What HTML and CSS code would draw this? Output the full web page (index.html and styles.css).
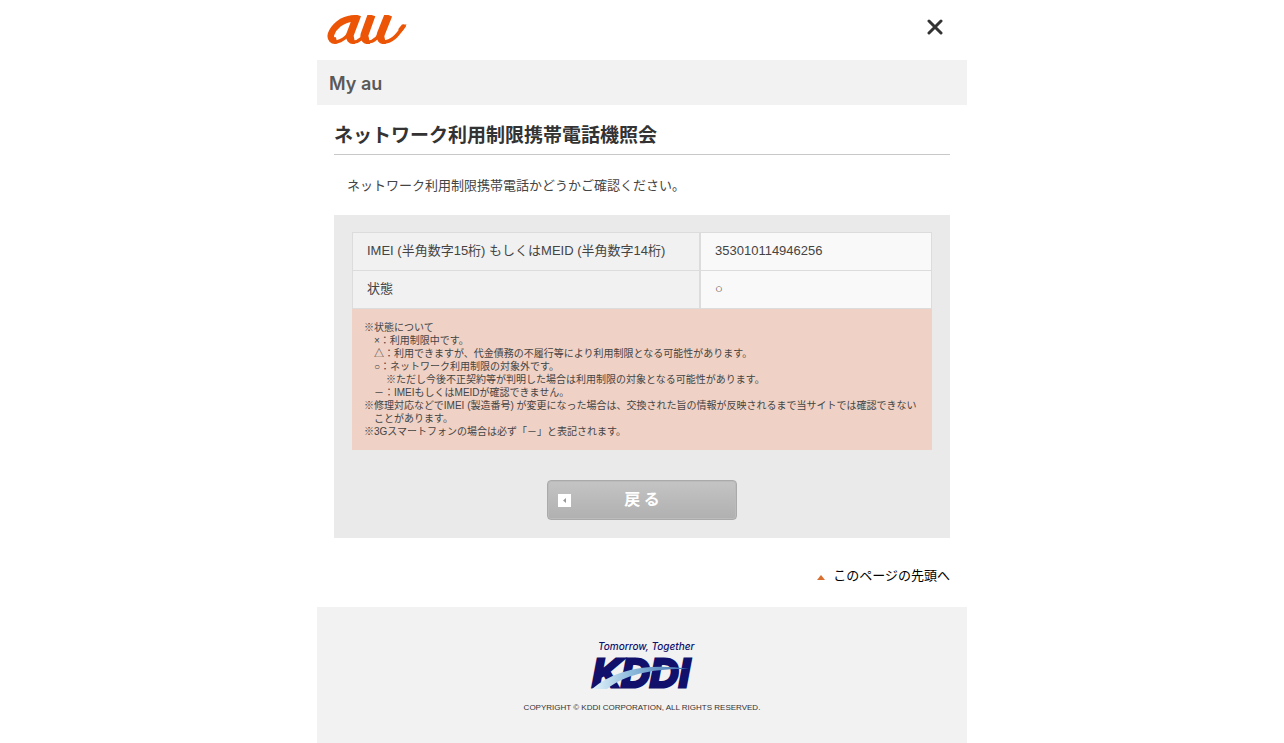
FILE: index.html
```html
<!DOCTYPE html>
<html lang="ja">
<head>
<meta charset="utf-8">
<meta name="viewport" content="width=device-width, initial-scale=1">
<title>ネットワーク利用制限携帯電話機照会</title>
<link rel="stylesheet" href="styles.css">
</head>
<body>
<div class="page" id="top">
  <header class="header">
    <svg class="au-logo" viewBox="0 0 240 88" role="img" aria-label="au">
      <g fill="none" stroke="#eb5505">
        <path stroke-width="20" d="M78 11C42 12 18 38 11 58C7 72 16 80 28 77"/>
        <path stroke-width="11" d="M70 7L92 6"/>
        <path stroke-width="10" d="M22 82C48 80 68 58 78 36"/>
        <path stroke-width="23" d="M91 0L69 58C65 72 72 78 82 76"/>
        <path stroke-width="10" d="M74 82C96 84 112 66 122 44"/>
        <path stroke-width="24" d="M134 0L113 58C109 72 117 78 127 76"/>
        <path stroke-width="10" d="M118 82C142 84 158 64 168 38"/>
        <path stroke-width="24" d="M185 0L162 58C158 72 166 78 175 76"/>
        <path stroke-width="11" d="M166 82C198 84 214 58 234 31"/>
      </g>
      <path fill="#eb5505" d="M214 44L226 29H240L228 48Z"/>
    </svg>
    <button class="close" type="button" aria-label="閉じる">
      <svg class="close-icon" viewBox="0 0 16 16"><path d="M2 2L14 14M14 2L2 14"/></svg>
    </button>
  </header>
  <div class="service">My au</div>
  <main class="main">
    <h1 class="title">ネットワーク利用制限携帯電話機照会</h1>
    <p class="lead">ネットワーク利用制限携帯電話かどうかご確認ください。</p>
    <section class="panel">
      <table class="result">
        <tr><th scope="row">IMEI (半角数字15桁) もしくはMEID (半角数字14桁)</th><td>353010114946256</td></tr>
        <tr><th scope="row">状態</th><td>○</td></tr>
      </table>
      <div class="notes">
        <p class="note">※状態について</p>
        <p class="state">×：利用制限中です。</p>
        <p class="state">△：利用できますが、代金債務の不履行等により利用制限となる可能性があります。</p>
        <p class="state">○：ネットワーク利用制限の対象外です。</p>
        <p class="substate">※ただし今後不正契約等が判明した場合は利用制限の対象となる可能性があります。</p>
        <p class="state">－：IMEIもしくはMEIDが確認できません。</p>
        <p class="note">※修理対応などでIMEI (製造番号) が変更になった場合は、交換された旨の情報が反映されるまで当サイトでは確認できないことがあります。</p>
        <p class="note">※3Gスマートフォンの場合は必ず「－」と表記されます。</p>
      </div>
      <button class="back" type="button">
        <svg class="back-icon" viewBox="0 0 13 13"><path fill="#fff" d="M0 0H13V13H0Z"/><path fill="#999" d="M8 4V9L5 6.500Z"/></svg>
        <span class="back-label">戻 る</span>
      </button>
    </section>
    <p class="to-top"><a href="#top"><svg class="up-icon" viewBox="0 0 8 5"><path fill="#d9702f" d="M4 0L8 5H0Z"/></svg>このページの先頭へ</a></p>
  </main>
  <footer class="footer">
    <svg class="kddi-logo" viewBox="0 0 102 48" role="img" aria-label="Tomorrow, Together KDDI">
      <defs>
        <linearGradient id="arc" x1="0" x2="1"><stop offset="0" stop-color="#e4f3fa"/><stop offset=".4" stop-color="#8dbbdc"/><stop offset="1" stop-color="#3c6dac"/></linearGradient>
      </defs>
      <text class="slogan" x="7" y="9">Tomorrow, Together</text>
      <text class="wordmark" x="1" y="46">KDDI</text>
      <path fill="url(#arc)" d="M1 48C24 28 58 22 98 28C64 27 34 33 16 48Z"/>
    </svg>
    <p class="copyright">COPYRIGHT © KDDI CORPORATION, ALL RIGHTS RESERVED.</p>
  </footer>
</div>
</body>
</html>
```
FILE: styles.css
```css
* { box-sizing: border-box; }
body {
  margin: 0;
  background: #fff;
  color: #444;
  font: 13px/20px "Liberation Sans", "Noto Sans CJK JP", sans-serif;
}
p, h1 { margin: 0; }
button { font-family: inherit; cursor: pointer; }
.page { max-width: 650px; margin: 0 auto; }
.header {
  display: flex;
  justify-content: space-between;
  align-items: flex-start;
  height: 60px;
  padding: 15px 20px 0 10px;
}
.au-logo { width: 80px; height: 29px; }
.close { padding: 4px; border: 0; background: none; line-height: 0; }
.close-icon { width: 16px; height: 16px; fill: none; stroke: #333; stroke-width: 3; stroke-linecap: round; }
.service {
  padding: 13px 12px 11px;
  background: #f2f2f2;
  color: #595959;
  font: 600 18px/21px Inter, sans-serif;
}
.main { padding: 16px 17px 21px; }
.title {
  padding-bottom: 4px;
  border-bottom: 1px solid #c8c8c8;
  color: #333;
  font-size: 19px;
  line-height: 29px;
}
.lead { padding: 21px 13px 19px; }
.panel { padding: 17px 18px 18px; background: #eaeaea; }
.result { width: 100%; border-collapse: separate; border-spacing: 0; table-layout: fixed; }
.result th, .result td {
  padding: 8px 14px 9px;
  border: 1px solid #dcdcdc;
  font-weight: normal;
  text-align: left;
}
.result th { width: 60%; background: #f1f1f1; }
.result td { background: #f9f9f9; }
.result tr + tr > * { border-top: 0; }
.notes {
  padding: 12px;
  background: #efd1c5;
  font-size: 10px;
  line-height: 13px;
}
.note { padding-left: 10px; text-indent: -10px; }
.state { padding-left: 10px; }
.substate { padding-left: 22px; }
.back {
  display: grid;
  grid-template-columns: 13px 1fr 13px;
  align-items: center;
  width: 190px;
  height: 40px;
  margin: 30px auto 0;
  padding: 0 10px;
  border: 1px solid #aaa;
  border-radius: 4px;
  background: linear-gradient(#c4c4c4, #b0b0b0);
  box-shadow: inset 0 0 0 1px #bbb;
  color: #fff;
}
.back-icon { width: 13px; height: 13px; }
.back-label { padding-bottom: 4px; font: bold 16px/20px "Noto Sans CJK JP", sans-serif; }
.to-top { padding-top: 28px; text-align: right; }
.to-top a { color: #000; text-decoration: none; }
.up-icon { width: 8px; height: 5px; margin-right: 8px; }
.footer {
  padding: 34px 0 30px;
  background: #f2f2f2;
  color: #333;
  text-align: center;
}
.kddi-logo { display: block; width: 102px; height: 48px; margin: 0 auto 12px; overflow: visible; }
.slogan { fill: #11116b; font: italic 500 10px Inter, sans-serif; }
.wordmark { fill: #11116b; stroke: #11116b; stroke-width: 3; font: italic bold 40px "Liberation Sans", sans-serif; }
.copyright { font-size: 8px; line-height: 14px; margin-bottom: -2px; }
```
